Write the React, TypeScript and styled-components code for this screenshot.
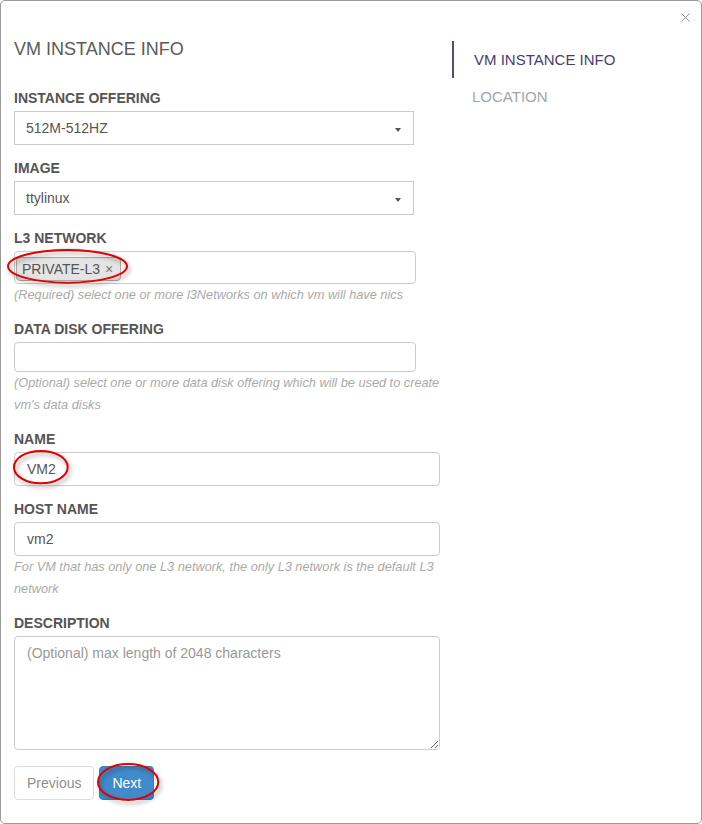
import React from 'react';
import styled, { createGlobalStyle } from 'styled-components';

const GlobalStyle = createGlobalStyle`
  html, body { margin: 0; padding: 0; background: #fff; }
  body { font-family: "Liberation Sans", Arial, sans-serif; }
  *, *::before, *::after { box-sizing: border-box; }
`;

const Modal = styled.div`
  position: relative;
  width: 702px;
  height: 824px;
  border: 1px solid #9a9a9a;
  border-radius: 5px;
  background: #fff;
  display: flex;
  gap: 8px;
  padding-left: 13px;
`;

const FormColumn = styled.div`
  width: 430px;
  padding-top: 38px;
  display: flex;
  flex-direction: column;
`;

const Title = styled.h2`
  margin: 0 0 29px;
  font-size: 18px;
  line-height: 20px;
  font-weight: normal;
  color: #5a5a5a;
`;

const FormGroup = styled.div<{ $last?: boolean }>`
  display: flex;
  flex-direction: column;
  margin-bottom: ${(p) => (p.$last ? 0 : 13)}px;
`;

const Label = styled.label`
  display: block;
  font-size: 14px;
  line-height: 20px;
  font-weight: bold;
  color: #555;
  margin-bottom: 3px;
`;

const SelectBox = styled.div`
  width: 400px;
  height: 34px;
  border: 1px solid #ccc;
  padding: 0 11px 0 11px;
  display: flex;
  align-items: center;
  justify-content: space-between;
  font-size: 14px;
  color: #555;
  background: #fff;
`;

const Caret = styled.span`
  width: 0;
  height: 0;
  margin-top: 3px;
  margin-right: 1px;
  border-left: 3px solid transparent;
  border-right: 3px solid transparent;
  border-top: 4px solid #555;
`;

const MultiSelect = styled.div<{ $h: number }>`
  width: 402px;
  height: ${(p) => p.$h}px;
  border: 1px solid #ccc;
  border-radius: 4px;
  display: flex;
  align-items: flex-start;
  padding: 5px 0 0 1px;
  background: #fff;
`;

const Chip = styled.span`
  display: inline-flex;
  align-items: center;
  height: 24px;
  border: 1px solid #aaa;
  border-radius: 4px;
  background: #e4e4e4;
  padding: 0 7px 0 5px;
  font-size: 14px;
  line-height: 22px;
  color: #555;
`;

const ChipRemove = styled.span`
  margin-left: 5px;
  color: #777;
  font-size: 14px;
`;

const TextInput = styled.input`
  width: 426px;
  height: 34px;
  border: 1px solid #ccc;
  border-radius: 4px;
  padding: 6px 12px;
  font-family: "Liberation Sans", Arial, sans-serif;
  font-size: 14px;
  color: #555;
  outline: none;
`;

const TextArea = styled.textarea`
  width: 426px;
  height: 114px;
  border: 1px solid #ccc;
  border-radius: 4px;
  padding: 6px 12px;
  font-family: "Liberation Sans", Arial, sans-serif;
  font-size: 14px;
  line-height: 20px;
  color: #555;
  resize: vertical;
  outline: none;
  &::placeholder { color: #999; }
`;

const Help = styled.p`
  margin: 0;
  font-size: 12.75px;
  line-height: 22px;
  font-style: italic;
  color: #aaa;
`;

const ButtonRow = styled.div`
  display: flex;
  gap: 5px;
  margin-top: 16px;
`;

const Button = styled.button<{ $primary?: boolean }>`
  height: 34px;
  padding: 0 12px;
  border-radius: 4px;
  font-family: "Liberation Sans", Arial, sans-serif;
  font-size: 14px;
  border: 1px solid ${(p) => (p.$primary ? '#357ebd' : '#ddd')};
  background: ${(p) => (p.$primary ? '#428bca' : '#fff')};
  color: ${(p) => (p.$primary ? '#fff' : '#8f8f8f')};
  cursor: pointer;
`;

const NavColumn = styled.nav`
  padding-top: 40px;
  display: flex;
  flex-direction: column;
  width: 230px;
`;

const NavItem = styled.div<{ $active?: boolean }>`
  height: 37px;
  line-height: 37px;
  font-size: 15px;
  padding-left: 20px;
  border-left: ${(p) => (p.$active ? '2px solid #5b4a7e' : 'none')};
  color: ${(p) => (p.$active ? '#4a3d6e' : '#9ea6b0')};
`;

const Close = styled.svg`
  position: absolute;
  top: 12px;
  right: 11px;
  cursor: pointer;
`;

const Annotation = styled.svg<{ $left: number; $top: number }>`
  position: absolute;
  left: ${(p) => p.$left}px;
  top: ${(p) => p.$top}px;
  overflow: visible;
  pointer-events: none;
  filter: drop-shadow(2px 3px 2px rgba(0, 0, 0, 0.35));
`;

const Ring: React.FC<{ left: number; top: number; w: number; h: number }> = ({ left, top, w, h }) => (
  <Annotation $left={left} $top={top} width={w} height={h} viewBox={`0 0 ${w} ${h}`}>
    <ellipse cx={w / 2} cy={h / 2} rx={w / 2 - 1} ry={h / 2 - 1} fill="none" stroke="#e30000" strokeWidth={2} />
  </Annotation>
);

export default function App() {
  return (
    <>
      <GlobalStyle />
      <Modal>
        <FormColumn>
          <Title>VM INSTANCE INFO</Title>

          <FormGroup>
            <Label>INSTANCE OFFERING</Label>
            <SelectBox>
              <span>512M-512HZ</span>
              <Caret />
            </SelectBox>
          </FormGroup>

          <FormGroup>
            <Label>IMAGE</Label>
            <SelectBox>
              <span>ttylinux</span>
              <Caret />
            </SelectBox>
          </FormGroup>

          <FormGroup>
            <Label>L3 NETWORK</Label>
            <MultiSelect $h={33}>
              <Chip>
                PRIVATE-L3
                <ChipRemove>×</ChipRemove>
              </Chip>
            </MultiSelect>
            <Help>(Required) select one or more l3Networks on which vm will have nics</Help>
          </FormGroup>

          <FormGroup>
            <Label>DATA DISK OFFERING</Label>
            <MultiSelect $h={30} />
            <Help>(Optional) select one or more data disk offering which will be used to create vm's data disks</Help>
          </FormGroup>

          <FormGroup>
            <Label>NAME</Label>
            <TextInput defaultValue="VM2" />
          </FormGroup>

          <FormGroup>
            <Label>HOST NAME</Label>
            <TextInput defaultValue="vm2" />
            <Help>For VM that has only one L3 network, the only L3 network is the default L3 network</Help>
          </FormGroup>

          <FormGroup $last>
            <Label>DESCRIPTION</Label>
            <TextArea placeholder="(Optional) max length of 2048 characters" />
          </FormGroup>

          <ButtonRow>
            <Button>Previous</Button>
            <Button $primary>Next</Button>
          </ButtonRow>
        </FormColumn>

        <NavColumn>
          <NavItem $active>VM INSTANCE INFO</NavItem>
          <NavItem>LOCATION</NavItem>
        </NavColumn>

        <Close width="9" height="9" viewBox="0 0 9 9">
          <path d="M0.5 0.5 L8.5 8.5 M8.5 0.5 L0.5 8.5" stroke="#8c8c8c" strokeWidth="1" fill="none" />
        </Close>

        <Ring left={5.7} top={248.3} w={121} h={34.7} />
        <Ring left={12.3} top={449} w={55.7} h={34.3} />
        <Ring left={95.7} top={761.7} w={62.3} h={38} />
      </Modal>
    </>
  );
}
